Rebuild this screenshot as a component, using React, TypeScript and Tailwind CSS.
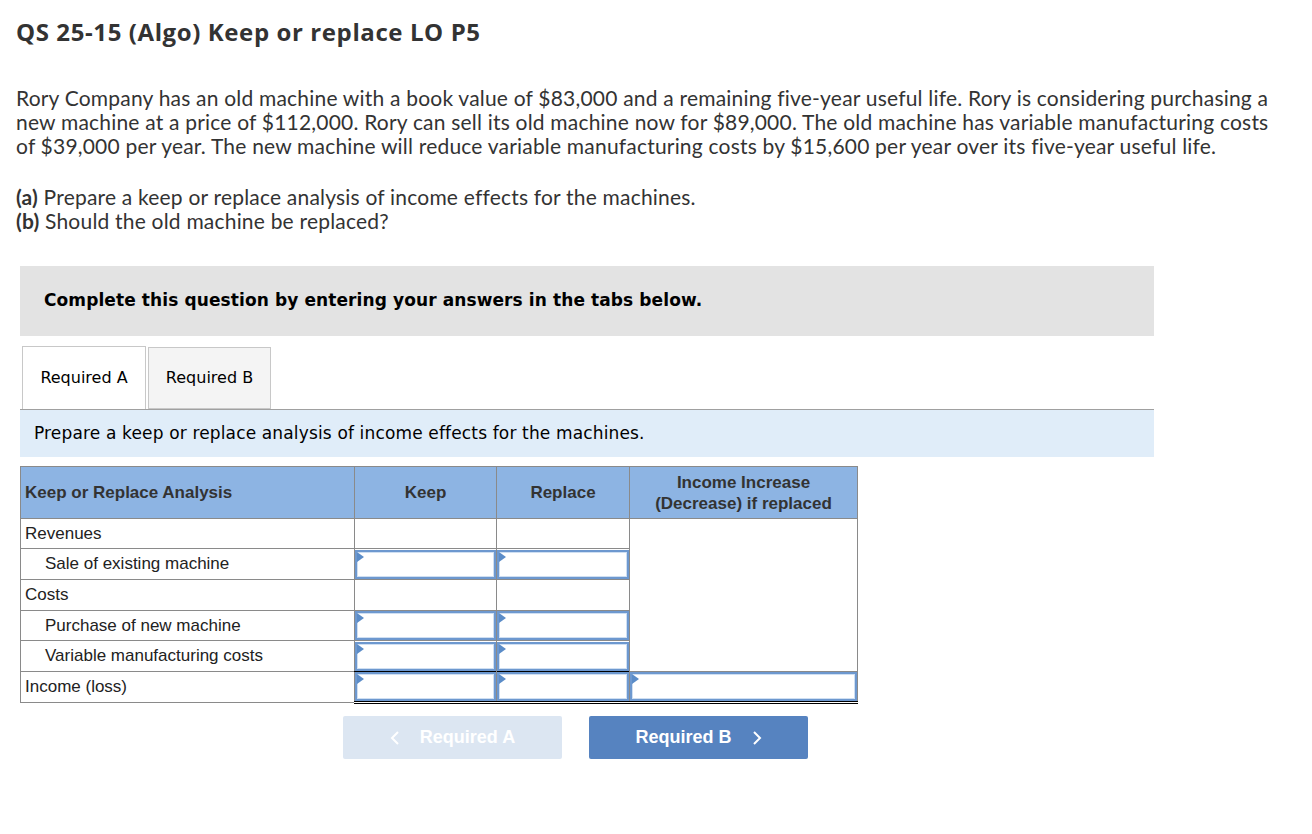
import React from "react";

const Flag = () => (
  <svg className="absolute left-0 top-0" width="7" height="10" viewBox="0 0 7 10">
    <polygon points="0,0 7,5 0,10" fill="#5b8cc8" />
  </svg>
);

const InputCell = () => (
  <div className="relative h-[29px] w-full border-2 border-[#6d98cf] bg-white">
    <div className="h-full w-full border border-[#cfdff2]" />
    <Flag />
  </div>
);

type Row = { label: string; indent: boolean; input: boolean; h: string };

const rows: Row[] = [
  { label: "Revenues", indent: false, input: false, h: "h-[30px]" },
  { label: "Sale of existing machine", indent: true, input: true, h: "h-[31px]" },
  { label: "Costs", indent: false, input: false, h: "h-[31px]" },
  { label: "Purchase of new machine", indent: true, input: true, h: "h-[30px]" },
  { label: "Variable manufacturing costs", indent: true, input: true, h: "h-[31px]" },
];

export default function App() {
  return (
    <div className="min-h-[834px] w-[1312px] bg-white text-[#333]">
      <div className="px-4 pt-[18px]">
        <h1 className="font-['Open_Sans',sans-serif] text-[24px] font-bold leading-[28px] tracking-[0.6px] text-[#333]">
          QS 25-15 (Algo) Keep or replace LO P5
        </h1>
        <p className="mt-[40px] max-w-[1268px] font-['Lato',sans-serif] text-[21px] leading-[24px] tracking-[0.2px] text-[#333]">
          Rory Company has an old machine with a book value of $83,000 and a remaining five-year useful life. Rory is considering purchasing a new machine at a price of $112,000. Rory can sell its old machine now for $89,000. The old machine has variable manufacturing costs of $39,000 per year. The new machine will reduce variable manufacturing costs by $15,600 per year over its five-year useful life.
        </p>
        <p className="mt-[27px] font-['Lato',sans-serif] text-[21px] leading-[24px] tracking-[0.2px] text-[#333]">
          <b>(a)</b> Prepare a keep or replace analysis of income effects for the machines.
          <br />
          <b>(b)</b> Should the old machine be replaced?
        </p>
      </div>

      <div className="ml-5 mt-[33px] w-[1134px]">
        <div className="flex h-[70px] items-center bg-[#e3e3e3] pl-6 font-['DejaVu_Sans',sans-serif] text-[17px] font-bold tracking-[0.1px] text-black">
          Complete this question by entering your answers in the tabs below.
        </div>

        <div className="mt-[11px] flex h-[62px] items-end gap-[2px] pl-[2px]">
          <div className="flex h-[63px] w-[124px] items-center justify-center border border-b-0 border-[#c8c8c8] bg-white font-['DejaVu_Sans',sans-serif] text-[16px] text-black">
            Required A
          </div>
          <div className="flex h-[62px] w-[123px] items-center justify-center border border-[#c8c8c8] bg-[#f4f4f4] font-['DejaVu_Sans',sans-serif] text-[16px] text-black">
            Required B
          </div>
        </div>
        <div className="flex h-[48px] items-center border-t border-[#a0a0a0] bg-[#e0edf9] pl-[14px] font-['DejaVu_Sans',sans-serif] text-[17px] tracking-[0.15px] text-black">
          Prepare a keep or replace analysis of income effects for the machines.
        </div>
      </div>

      <div className="ml-5 mt-[9px] w-[837px] font-['Liberation_Sans',Arial,sans-serif] text-[17px] text-[#222]">
        <table className="w-[837px] table-fixed border-collapse">
          <colgroup>
            <col className="w-[334px]" />
            <col className="w-[142px]" />
            <col className="w-[133px]" />
            <col className="w-[228px]" />
          </colgroup>
          <thead>
            <tr className="h-[52px] bg-[#8db4e3] font-bold text-[#333]">
              <th className="border border-[#8a8a8a] pl-1 text-left font-bold">Keep or Replace Analysis</th>
              <th className="border border-[#8a8a8a] text-center font-bold">Keep</th>
              <th className="border border-[#8a8a8a] text-center font-bold">Replace</th>
              <th className="border border-[#8a8a8a] text-center font-bold leading-[21px]">
                Income Increase
                <br />
                (Decrease) if replaced
              </th>
            </tr>
          </thead>
          <tbody>
            {rows.map((r, i) => (
              <tr key={r.label} className={r.h}>
                <td className={`border border-[#8a8a8a] ${r.indent ? "pl-6" : "pl-1"}`}>{r.label}</td>
                <td className="border border-[#8a8a8a] p-0">
                  {r.input ? <InputCell /> : null}
                </td>
                <td className="border border-[#8a8a8a] p-0">
                  {r.input ? <InputCell /> : null}
                </td>
                {i === 0 ? <td rowSpan={5} className="border border-[#8a8a8a] bg-white" /> : null}
              </tr>
            ))}
            <tr className="h-[31px]">
              <td className="border border-[#8a8a8a] pl-1">Income (loss)</td>
              <td className="border-x border-t border-x-[#8a8a8a] border-t-black border-b-[3px] border-double border-b-black p-0">
                <InputCell />
              </td>
              <td className="border-x border-t border-x-[#8a8a8a] border-t-black border-b-[3px] border-double border-b-black p-0">
                <InputCell />
              </td>
              <td className="border-x border-t border-x-[#8a8a8a] border-t-[#8a8a8a] border-b-[3px] border-double border-b-black p-0">
                <InputCell />
              </td>
            </tr>
          </tbody>
        </table>
      </div>

      <div className="ml-[343px] mt-[12px] flex gap-[27px] font-['Liberation_Sans',Arial,sans-serif] text-[18px] font-bold text-white">
        <div className="flex h-[43px] w-[219px] items-center justify-center gap-5 rounded-[2px] bg-[#dce6f2] text-white">
          <svg width="10" height="16" viewBox="0 0 10 16">
            <polyline points="8,2 2,8 8,14" fill="none" stroke="white" strokeWidth="2" />
          </svg>
          <span>Required A</span>
        </div>
        <div className="flex h-[43px] w-[219px] items-center justify-center gap-5 rounded-[2px] bg-[#5683c0]">
          <span>Required B</span>
          <svg width="10" height="16" viewBox="0 0 10 16">
            <polyline points="2,2 8,8 2,14" fill="none" stroke="white" strokeWidth="2" />
          </svg>
        </div>
      </div>
    </div>
  );
}
